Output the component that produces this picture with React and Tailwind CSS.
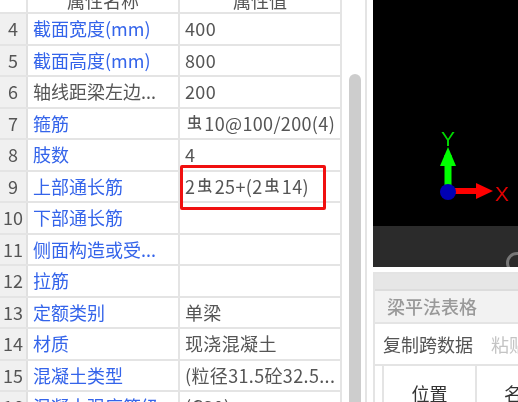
const Bar = () => <span className="mx-[2px] align-[3px] text-[15px] font-medium">虫</span>;

const rows = [
  { no: 4, name: "截面宽度(mm)", value: "400", blue: true },
  { no: 5, name: "截面高度(mm)", value: "800", blue: true },
  { no: 6, name: "轴线距梁左边...", value: "200" },
  { no: 7, name: "箍筋", value: <><Bar />10@100/200(4)</>, blue: true },
  { no: 8, name: "肢数", value: "4", blue: true },
  { no: 9, name: "上部通长筋", value: <>2<Bar />25+(2<Bar />14)</>, blue: true },
  { no: 10, name: "下部通长筋", value: "", blue: true },
  { no: 11, name: "侧面构造或受...", value: "", blue: true },
  { no: 12, name: "拉筋", value: "", blue: true },
  { no: 13, name: "定额类别", value: "单梁", blue: true },
  { no: 14, name: "材质", value: "现浇混凝土", blue: true },
  { no: 15, name: "混凝土类型", value: "(粒径31.5砼32.5...", blue: true },
  { no: 16, name: "混凝土强度等级", value: "(C30)", blue: true },
];

const AxisGizmo = () => (
  <svg className="absolute left-[55px] top-[125px]" width="90" height="85" viewBox="0 0 90 85">
    <rect x="16.5" y="30" width="7" height="30" fill="#00ff00" />
    <polygon points="20,22 28,41 12,41" fill="#00ff00" />
    <rect x="25" y="63" width="24" height="6" fill="#ff0000" />
    <polygon points="65,66 48,58 48,74" fill="#ff0000" />
    <circle cx="20" cy="67" r="8" fill="#0000b4" />
    <text x="20" y="21" textAnchor="middle" fontSize="21" fill="#00d800" fontFamily="Liberation Sans, sans-serif">Y</text>
    <text x="74" y="76" textAnchor="middle" fontSize="21" fill="#e00000" fontFamily="Liberation Sans, sans-serif">X</text>
  </svg>
);

export default function App() {
  return (
    <div className="relative flex h-[402px] w-[518px] overflow-hidden bg-white font-['Noto_Sans_CJK_SC',sans-serif] text-[18px] text-[#555] blur-[0.4px]">
      {/* property table */}
      <div className="w-[342px] shrink-0 border-r-2 border-[#e4e4e4]">
        <div className="flex h-[14px] items-end overflow-hidden border-b-2 border-[#e4e4e4] leading-[24px]">
          <div className="h-full w-[28px] shrink-0 border-r-2 border-[#e4e4e4]" />
          <div className="w-[152px] shrink-0 border-r-2 border-[#e4e4e4] text-center">属性名称</div>
          <div className="grow text-center">属性值</div>
        </div>
        {rows.map((row) => (
          <div key={row.no} className="flex h-[31.5px] border-b-2 border-[#e4e4e4]">
            <div className="flex w-[28px] shrink-0 items-center justify-center border-r-2 border-[#e0e0e0] bg-[#f0f0f0]">{row.no}</div>
            <div className={`flex w-[152px] shrink-0 items-center whitespace-nowrap border-r-2 border-[#e4e4e4] pl-[5px] ${row.blue ? "text-[#3464ea]" : ""}`}>
              {row.name}
            </div>
            <div className="flex grow items-center whitespace-pre pl-[5px] tracking-[0.35px]">
              <span>{row.value}</span>
            </div>
          </div>
        ))}
      </div>

      {/* scrollbar */}
      <div className="w-[25px] shrink-0 border-r-2 border-[#e4e4e4] pl-[7px] pt-[74px]">
        <div className="h-[340px] w-[12px] rounded-t-full bg-[#cdcdcd]" />
      </div>

      {/* right side */}
      <div className="ml-[6px] flex grow flex-col">
        <div className="relative h-[226px] shrink-0 bg-black">
          <AxisGizmo />
        </div>
        <div className="relative h-[41px] shrink-0 overflow-hidden bg-[#2b2b2b]">
          <div className="absolute left-[133px] top-[26px] h-[22px] w-[22px] rounded-full border-[3px] border-[#777]" />
        </div>

        <div className="mt-[5px] grow border-l-2 border-t-2 border-[#e4e4e4]">
          <div className="h-[17px] border-b-2 border-[#dcdcdc] bg-[#e6e6e6]" />
          <div className="flex h-[33px] items-center border-b-2 border-[#e4e4e4] bg-[#f2f2f2] pl-[12px] font-medium text-[#999]">
            梁平法表格
          </div>
          <div className="flex h-[42px] items-center gap-[18px] whitespace-nowrap border-b-2 border-[#e4e4e4] pl-[8px]">
            <span>复制跨数据</span>
            <span className="text-[#c4c4c4]">粘贴</span>
          </div>
          <div className="flex h-[40px] whitespace-nowrap">
            <div className="w-[9px] shrink-0 border-r-2 border-[#e4e4e4]" />
            <div className="flex w-[93px] shrink-0 items-center justify-center border-r-2 border-[#e4e4e4] pt-[14px] text-[#333]">位置</div>
            <div className="flex grow items-center pl-[27px] pt-[14px] text-[#333]">名称</div>
          </div>
        </div>
      </div>

      {/* red highlight */}
      <div className="absolute left-[180px] top-[165px] h-[45px] w-[146px] rounded-[2px] border-[3px] border-[#f01010]" />
    </div>
  );
}
